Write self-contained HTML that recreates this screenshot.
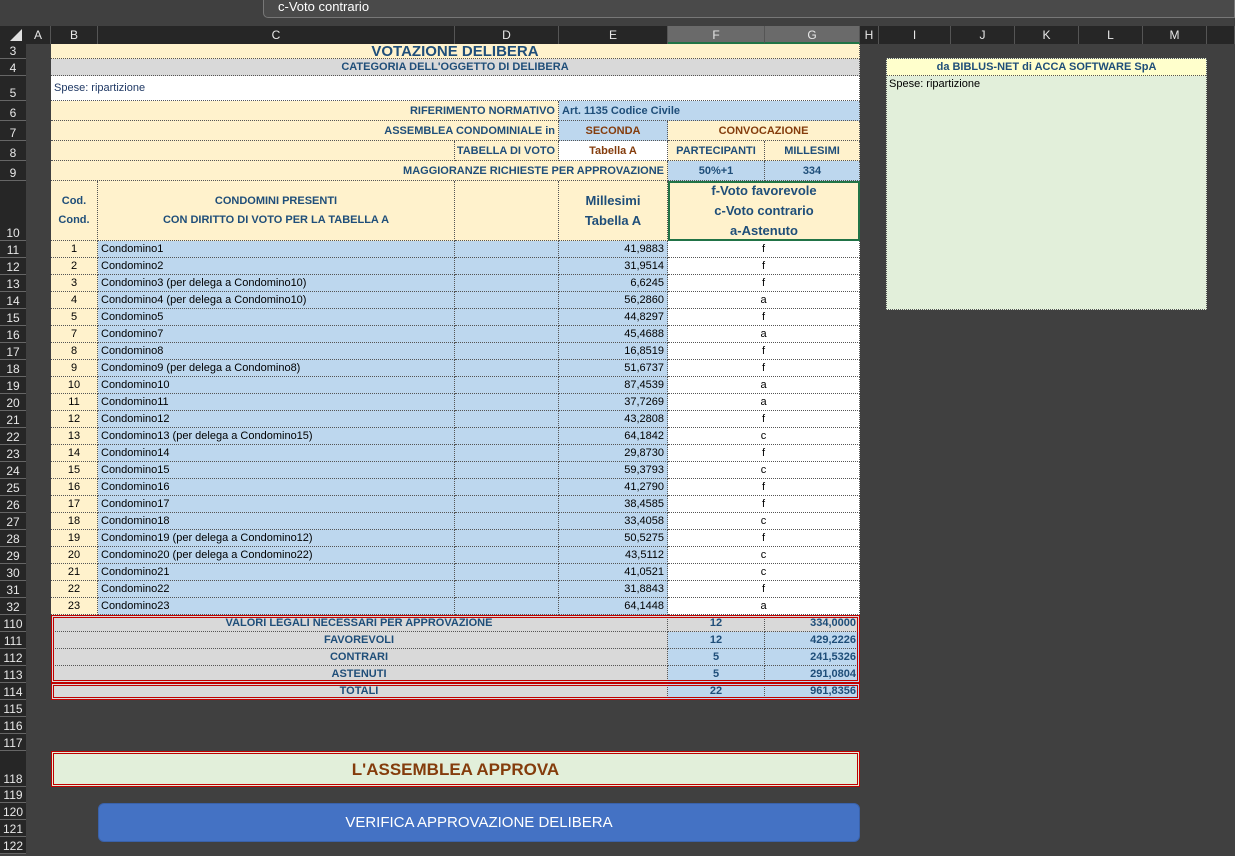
<!DOCTYPE html>
<html><head><meta charset="utf-8"><style>
*{margin:0;padding:0;box-sizing:border-box}
body{width:1235px;height:856px;background:#404040;position:relative;overflow:hidden;font-family:"Liberation Sans",sans-serif;font-size:11px;color:#1f3864}
.a{position:absolute;white-space:nowrap;overflow:hidden}
.ch{position:absolute;top:26px;height:18px;background:#262626;color:#e8e8e8;font-size:12px;text-align:center;line-height:18px;border-right:1px solid #555}
.rh{position:absolute;left:0;width:26px;background:#262626;color:#e8e8e8;font-size:12px;text-align:center;border-bottom:1px solid #666;display:flex;align-items:flex-end;justify-content:center;line-height:14px}
.c{position:absolute;white-space:nowrap;overflow:hidden;border-right:1px dotted #555;border-bottom:1px dotted #555;display:flex;align-items:center;padding:0 3px}
.b{font-weight:bold;color:#1f4e79}
.cr{background:#fff2cc}.bl{background:#bdd7ee}.gr{background:#d9d9d9}.wh{background:#fff}
.r{justify-content:flex-end}.m{justify-content:center}
.br{color:#843c0c}
</style></head><body>
<div class="a" style="left:0;top:0;width:1235px;height:26px;background:#404040"></div>
<div class="a" style="left:263px;top:0;width:972px;height:18px;background:#4a4a4a;border:1px solid #777;border-top:none;border-radius:0 0 0 5px;color:#fff;font-size:13px;padding-left:14px;line-height:14px">c-Voto contrario</div>
<div class="a" style="left:0;top:26px;width:1235px;height:18px;background:#262626"></div>
<div class="a" style="left:10px;top:29px;width:0;height:0;border-left:12px solid transparent;border-bottom:12px solid #e0e0e0"></div>
<div class="ch" style="left:26px;width:25px">A</div>
<div class="ch" style="left:51px;width:47px">B</div>
<div class="ch" style="left:98px;width:357px">C</div>
<div class="ch" style="left:455px;width:104px">D</div>
<div class="ch" style="left:559px;width:109px">E</div>
<div class="ch" style="left:668px;width:97px;background:#6a6a6a;border-bottom:2px solid #217346">F</div>
<div class="ch" style="left:765px;width:95px;background:#6a6a6a;border-bottom:2px solid #217346">G</div>
<div class="ch" style="left:860px;width:19px">H</div>
<div class="ch" style="left:879px;width:72px">I</div>
<div class="ch" style="left:951px;width:64px">J</div>
<div class="ch" style="left:1015px;width:64px">K</div>
<div class="ch" style="left:1079px;width:64px">L</div>
<div class="ch" style="left:1143px;width:64px">M</div>
<div class="ch" style="left:1207px;width:28px"></div>

<div class="rh" style="top:44px;height:15px">3</div>
<div class="rh" style="top:59px;height:17px">4</div>
<div class="rh" style="top:76px;height:25px">5</div>
<div class="rh" style="top:101px;height:20px">6</div>
<div class="rh" style="top:121px;height:20px">7</div>
<div class="rh" style="top:141px;height:20px">8</div>
<div class="rh" style="top:161px;height:20px">9</div>
<div class="rh" style="top:181px;height:60px">10</div>
<div class="rh" style="top:241px;height:17px">11</div><div class="rh" style="top:258px;height:17px">12</div><div class="rh" style="top:275px;height:17px">13</div><div class="rh" style="top:292px;height:17px">14</div><div class="rh" style="top:309px;height:17px">15</div><div class="rh" style="top:326px;height:17px">16</div><div class="rh" style="top:343px;height:17px">17</div><div class="rh" style="top:360px;height:17px">18</div><div class="rh" style="top:377px;height:17px">19</div><div class="rh" style="top:394px;height:17px">20</div><div class="rh" style="top:411px;height:17px">21</div><div class="rh" style="top:428px;height:17px">22</div><div class="rh" style="top:445px;height:17px">23</div><div class="rh" style="top:462px;height:17px">24</div><div class="rh" style="top:479px;height:17px">25</div><div class="rh" style="top:496px;height:17px">26</div><div class="rh" style="top:513px;height:17px">27</div><div class="rh" style="top:530px;height:17px">28</div><div class="rh" style="top:547px;height:17px">29</div><div class="rh" style="top:564px;height:17px">30</div><div class="rh" style="top:581px;height:17px">31</div><div class="rh" style="top:598px;height:17px">32</div>
<div class="rh" style="top:615px;height:17px">110</div><div class="rh" style="top:632px;height:17px">111</div><div class="rh" style="top:649px;height:17px">112</div><div class="rh" style="top:666px;height:17px">113</div><div class="rh" style="top:683px;height:17px">114</div><div class="rh" style="top:700px;height:17px">115</div><div class="rh" style="top:717px;height:17px">116</div><div class="rh" style="top:734px;height:17px">117</div>
<div class="rh" style="top:751px;height:36px">118</div><div class="rh" style="top:787px;height:16px">119</div><div class="rh" style="top:803px;height:17px">120</div><div class="rh" style="top:820px;height:17px">121</div><div class="rh" style="top:837px;height:17px">122</div>

<!-- header block -->
<div class="c cr m b" style="left:51px;top:44px;width:809px;height:15px;font-size:15px;align-items:flex-end;line-height:12px">VOTAZIONE DELIBERA</div>
<div class="c gr m b" style="left:51px;top:59px;width:809px;height:17px">CATEGORIA DELL'OGGETTO DI DELIBERA</div>
<div class="c wh" style="left:51px;top:76px;width:809px;height:25px;color:#1f3864">Spese: ripartizione</div>
<div class="c cr r b" style="left:51px;top:101px;width:508px;height:20px">RIFERIMENTO NORMATIVO</div>
<div class="c bl b" style="left:559px;top:101px;width:301px;height:20px">Art. 1135 Codice Civile</div>
<div class="c cr r b" style="left:51px;top:121px;width:508px;height:20px">ASSEMBLEA CONDOMINIALE in</div>
<div class="c bl m b br" style="left:559px;top:121px;width:109px;height:20px">SECONDA</div>
<div class="c cr m b br" style="left:668px;top:121px;width:192px;height:20px">CONVOCAZIONE</div>
<div class="c cr" style="left:51px;top:141px;width:404px;height:20px"></div>
<div class="c cr r b" style="left:455px;top:141px;width:104px;height:20px">TABELLA DI VOTO</div>
<div class="c wh m b br" style="left:559px;top:141px;width:109px;height:20px">Tabella A</div>
<div class="c cr m b" style="left:668px;top:141px;width:97px;height:20px">PARTECIPANTI</div>
<div class="c cr m b" style="left:765px;top:141px;width:95px;height:20px">MILLESIMI</div>
<div class="c cr r b" style="left:51px;top:161px;width:617px;height:20px">MAGGIORANZE RICHIESTE PER APPROVAZIONE</div>
<div class="c bl m b" style="left:668px;top:161px;width:97px;height:20px">50%+1</div>
<div class="c bl m b" style="left:765px;top:161px;width:95px;height:20px">334</div>
<div class="c cr m b" style="left:51px;top:181px;width:47px;height:60px;white-space:normal;text-align:center;line-height:19px">Cod.<br>Cond.</div>
<div class="c cr m b" style="left:98px;top:181px;width:357px;height:60px;text-align:center;line-height:19px">CONDOMINI PRESENTI<br>CON DIRITTO DI VOTO PER LA TABELLA A</div>
<div class="c cr" style="left:455px;top:181px;width:104px;height:60px"></div>
<div class="c cr m b" style="left:559px;top:181px;width:109px;height:60px;font-size:13px;text-align:center;line-height:20px">Millesimi<br>Tabella A</div>
<div class="c cr m b" style="left:668px;top:181px;width:192px;height:60px;font-size:13px;text-align:center;line-height:20px;border:2px solid #217346">f-Voto favorevole<br>c-Voto contrario<br>a-Astenuto</div>

<div id="rows"></div>
<!-- data rows -->
<div class="c cr m" style="left:51px;top:241px;width:47px;height:17px;color:#000">1</div><div class="c bl" style="left:98px;top:241px;width:357px;height:17px;color:#000">Condomino1</div><div class="c bl" style="left:455px;top:241px;width:104px;height:17px"></div><div class="c bl r" style="left:559px;top:241px;width:109px;height:17px;color:#000">41,9883</div><div class="c wh m" style="left:668px;top:241px;width:192px;height:17px;color:#000">f</div>
<div class="c cr m" style="left:51px;top:258px;width:47px;height:17px;color:#000">2</div><div class="c bl" style="left:98px;top:258px;width:357px;height:17px;color:#000">Condomino2</div><div class="c bl" style="left:455px;top:258px;width:104px;height:17px"></div><div class="c bl r" style="left:559px;top:258px;width:109px;height:17px;color:#000">31,9514</div><div class="c wh m" style="left:668px;top:258px;width:192px;height:17px;color:#000">f</div>
<div class="c cr m" style="left:51px;top:275px;width:47px;height:17px;color:#000">3</div><div class="c bl" style="left:98px;top:275px;width:357px;height:17px;color:#000">Condomino3 (per delega a Condomino10)</div><div class="c bl" style="left:455px;top:275px;width:104px;height:17px"></div><div class="c bl r" style="left:559px;top:275px;width:109px;height:17px;color:#000">6,6245</div><div class="c wh m" style="left:668px;top:275px;width:192px;height:17px;color:#000">f</div>
<div class="c cr m" style="left:51px;top:292px;width:47px;height:17px;color:#000">4</div><div class="c bl" style="left:98px;top:292px;width:357px;height:17px;color:#000">Condomino4 (per delega a Condomino10)</div><div class="c bl" style="left:455px;top:292px;width:104px;height:17px"></div><div class="c bl r" style="left:559px;top:292px;width:109px;height:17px;color:#000">56,2860</div><div class="c wh m" style="left:668px;top:292px;width:192px;height:17px;color:#000">a</div>
<div class="c cr m" style="left:51px;top:309px;width:47px;height:17px;color:#000">5</div><div class="c bl" style="left:98px;top:309px;width:357px;height:17px;color:#000">Condomino5</div><div class="c bl" style="left:455px;top:309px;width:104px;height:17px"></div><div class="c bl r" style="left:559px;top:309px;width:109px;height:17px;color:#000">44,8297</div><div class="c wh m" style="left:668px;top:309px;width:192px;height:17px;color:#000">f</div>
<div class="c cr m" style="left:51px;top:326px;width:47px;height:17px;color:#000">7</div><div class="c bl" style="left:98px;top:326px;width:357px;height:17px;color:#000">Condomino7</div><div class="c bl" style="left:455px;top:326px;width:104px;height:17px"></div><div class="c bl r" style="left:559px;top:326px;width:109px;height:17px;color:#000">45,4688</div><div class="c wh m" style="left:668px;top:326px;width:192px;height:17px;color:#000">a</div>
<div class="c cr m" style="left:51px;top:343px;width:47px;height:17px;color:#000">8</div><div class="c bl" style="left:98px;top:343px;width:357px;height:17px;color:#000">Condomino8</div><div class="c bl" style="left:455px;top:343px;width:104px;height:17px"></div><div class="c bl r" style="left:559px;top:343px;width:109px;height:17px;color:#000">16,8519</div><div class="c wh m" style="left:668px;top:343px;width:192px;height:17px;color:#000">f</div>
<div class="c cr m" style="left:51px;top:360px;width:47px;height:17px;color:#000">9</div><div class="c bl" style="left:98px;top:360px;width:357px;height:17px;color:#000">Condomino9 (per delega a Condomino8)</div><div class="c bl" style="left:455px;top:360px;width:104px;height:17px"></div><div class="c bl r" style="left:559px;top:360px;width:109px;height:17px;color:#000">51,6737</div><div class="c wh m" style="left:668px;top:360px;width:192px;height:17px;color:#000">f</div>
<div class="c cr m" style="left:51px;top:377px;width:47px;height:17px;color:#000">10</div><div class="c bl" style="left:98px;top:377px;width:357px;height:17px;color:#000">Condomino10</div><div class="c bl" style="left:455px;top:377px;width:104px;height:17px"></div><div class="c bl r" style="left:559px;top:377px;width:109px;height:17px;color:#000">87,4539</div><div class="c wh m" style="left:668px;top:377px;width:192px;height:17px;color:#000">a</div>
<div class="c cr m" style="left:51px;top:394px;width:47px;height:17px;color:#000">11</div><div class="c bl" style="left:98px;top:394px;width:357px;height:17px;color:#000">Condomino11</div><div class="c bl" style="left:455px;top:394px;width:104px;height:17px"></div><div class="c bl r" style="left:559px;top:394px;width:109px;height:17px;color:#000">37,7269</div><div class="c wh m" style="left:668px;top:394px;width:192px;height:17px;color:#000">a</div>
<div class="c cr m" style="left:51px;top:411px;width:47px;height:17px;color:#000">12</div><div class="c bl" style="left:98px;top:411px;width:357px;height:17px;color:#000">Condomino12</div><div class="c bl" style="left:455px;top:411px;width:104px;height:17px"></div><div class="c bl r" style="left:559px;top:411px;width:109px;height:17px;color:#000">43,2808</div><div class="c wh m" style="left:668px;top:411px;width:192px;height:17px;color:#000">f</div>
<div class="c cr m" style="left:51px;top:428px;width:47px;height:17px;color:#000">13</div><div class="c bl" style="left:98px;top:428px;width:357px;height:17px;color:#000">Condomino13 (per delega a Condomino15)</div><div class="c bl" style="left:455px;top:428px;width:104px;height:17px"></div><div class="c bl r" style="left:559px;top:428px;width:109px;height:17px;color:#000">64,1842</div><div class="c wh m" style="left:668px;top:428px;width:192px;height:17px;color:#000">c</div>
<div class="c cr m" style="left:51px;top:445px;width:47px;height:17px;color:#000">14</div><div class="c bl" style="left:98px;top:445px;width:357px;height:17px;color:#000">Condomino14</div><div class="c bl" style="left:455px;top:445px;width:104px;height:17px"></div><div class="c bl r" style="left:559px;top:445px;width:109px;height:17px;color:#000">29,8730</div><div class="c wh m" style="left:668px;top:445px;width:192px;height:17px;color:#000">f</div>
<div class="c cr m" style="left:51px;top:462px;width:47px;height:17px;color:#000">15</div><div class="c bl" style="left:98px;top:462px;width:357px;height:17px;color:#000">Condomino15</div><div class="c bl" style="left:455px;top:462px;width:104px;height:17px"></div><div class="c bl r" style="left:559px;top:462px;width:109px;height:17px;color:#000">59,3793</div><div class="c wh m" style="left:668px;top:462px;width:192px;height:17px;color:#000">c</div>
<div class="c cr m" style="left:51px;top:479px;width:47px;height:17px;color:#000">16</div><div class="c bl" style="left:98px;top:479px;width:357px;height:17px;color:#000">Condomino16</div><div class="c bl" style="left:455px;top:479px;width:104px;height:17px"></div><div class="c bl r" style="left:559px;top:479px;width:109px;height:17px;color:#000">41,2790</div><div class="c wh m" style="left:668px;top:479px;width:192px;height:17px;color:#000">f</div>
<div class="c cr m" style="left:51px;top:496px;width:47px;height:17px;color:#000">17</div><div class="c bl" style="left:98px;top:496px;width:357px;height:17px;color:#000">Condomino17</div><div class="c bl" style="left:455px;top:496px;width:104px;height:17px"></div><div class="c bl r" style="left:559px;top:496px;width:109px;height:17px;color:#000">38,4585</div><div class="c wh m" style="left:668px;top:496px;width:192px;height:17px;color:#000">f</div>
<div class="c cr m" style="left:51px;top:513px;width:47px;height:17px;color:#000">18</div><div class="c bl" style="left:98px;top:513px;width:357px;height:17px;color:#000">Condomino18</div><div class="c bl" style="left:455px;top:513px;width:104px;height:17px"></div><div class="c bl r" style="left:559px;top:513px;width:109px;height:17px;color:#000">33,4058</div><div class="c wh m" style="left:668px;top:513px;width:192px;height:17px;color:#000">c</div>
<div class="c cr m" style="left:51px;top:530px;width:47px;height:17px;color:#000">19</div><div class="c bl" style="left:98px;top:530px;width:357px;height:17px;color:#000">Condomino19 (per delega a Condomino12)</div><div class="c bl" style="left:455px;top:530px;width:104px;height:17px"></div><div class="c bl r" style="left:559px;top:530px;width:109px;height:17px;color:#000">50,5275</div><div class="c wh m" style="left:668px;top:530px;width:192px;height:17px;color:#000">f</div>
<div class="c cr m" style="left:51px;top:547px;width:47px;height:17px;color:#000">20</div><div class="c bl" style="left:98px;top:547px;width:357px;height:17px;color:#000">Condomino20 (per delega a Condomino22)</div><div class="c bl" style="left:455px;top:547px;width:104px;height:17px"></div><div class="c bl r" style="left:559px;top:547px;width:109px;height:17px;color:#000">43,5112</div><div class="c wh m" style="left:668px;top:547px;width:192px;height:17px;color:#000">c</div>
<div class="c cr m" style="left:51px;top:564px;width:47px;height:17px;color:#000">21</div><div class="c bl" style="left:98px;top:564px;width:357px;height:17px;color:#000">Condomino21</div><div class="c bl" style="left:455px;top:564px;width:104px;height:17px"></div><div class="c bl r" style="left:559px;top:564px;width:109px;height:17px;color:#000">41,0521</div><div class="c wh m" style="left:668px;top:564px;width:192px;height:17px;color:#000">c</div>
<div class="c cr m" style="left:51px;top:581px;width:47px;height:17px;color:#000">22</div><div class="c bl" style="left:98px;top:581px;width:357px;height:17px;color:#000">Condomino22</div><div class="c bl" style="left:455px;top:581px;width:104px;height:17px"></div><div class="c bl r" style="left:559px;top:581px;width:109px;height:17px;color:#000">31,8843</div><div class="c wh m" style="left:668px;top:581px;width:192px;height:17px;color:#000">f</div>
<div class="c cr m" style="left:51px;top:598px;width:47px;height:17px;color:#000">23</div><div class="c bl" style="left:98px;top:598px;width:357px;height:17px;color:#000">Condomino23</div><div class="c bl" style="left:455px;top:598px;width:104px;height:17px"></div><div class="c bl r" style="left:559px;top:598px;width:109px;height:17px;color:#000">64,1448</div><div class="c wh m" style="left:668px;top:598px;width:192px;height:17px;color:#000">a</div>

<!-- totals -->
<div class="c gr m b" style="left:51px;top:615px;width:617px;height:17px">VALORI LEGALI NECESSARI PER APPROVAZIONE</div>
<div class="c gr m b" style="left:668px;top:615px;width:97px;height:17px">12</div>
<div class="c gr r b" style="left:765px;top:615px;width:95px;height:17px">334,0000</div>
<div class="c gr m b" style="left:51px;top:632px;width:617px;height:17px">FAVOREVOLI</div>
<div class="c bl m b" style="left:668px;top:632px;width:97px;height:17px">12</div>
<div class="c bl r b" style="left:765px;top:632px;width:95px;height:17px">429,2226</div>
<div class="c gr m b" style="left:51px;top:649px;width:617px;height:17px">CONTRARI</div>
<div class="c bl m b" style="left:668px;top:649px;width:97px;height:17px">5</div>
<div class="c bl r b" style="left:765px;top:649px;width:95px;height:17px">241,5326</div>
<div class="c gr m b" style="left:51px;top:666px;width:617px;height:17px">ASTENUTI</div>
<div class="c bl m b" style="left:668px;top:666px;width:97px;height:17px">5</div>
<div class="c bl r b" style="left:765px;top:666px;width:95px;height:17px">291,0804</div>
<div class="c gr m b" style="left:51px;top:683px;width:617px;height:17px">TOTALI</div>
<div class="c bl m b" style="left:668px;top:683px;width:97px;height:17px">22</div>
<div class="c bl r b" style="left:765px;top:683px;width:95px;height:17px">961,8356</div>
<div class="a" style="left:51px;top:615px;width:809px;height:68px;border:3px double #c00000"></div>
<div class="a" style="left:51px;top:683px;width:809px;height:17px;border:3px double #c00000"></div>

<div class="a" style="left:51px;top:751px;width:809px;height:36px;background:#e2efda;border:3px double #c00000;color:#843c0c;font-weight:bold;font-size:17px;text-align:center;line-height:32px">L'ASSEMBLEA APPROVA</div>
<div class="a" style="left:98px;top:803px;width:762px;height:39px;background:#4472c4;border:1px solid #3a62aa;border-radius:6px;color:#fff;font-size:15px;text-align:center;line-height:37px">VERIFICA APPROVAZIONE DELIBERA</div>

<div class="a" style="left:886px;top:58px;width:321px;height:252px;background:#e2efda;border:1px dotted #555"></div>
<div class="a" style="left:887px;top:59px;width:319px;height:17px;background:#ffffcc;border-bottom:1px dotted #555;text-align:center;font-weight:bold;color:#1f4e79;line-height:16px">da BIBLUS-NET di ACCA SOFTWARE SpA</div>
<div class="a" style="left:889px;top:78px;color:#000;font-size:11px">Spese: ripartizione</div>
</body></html>
